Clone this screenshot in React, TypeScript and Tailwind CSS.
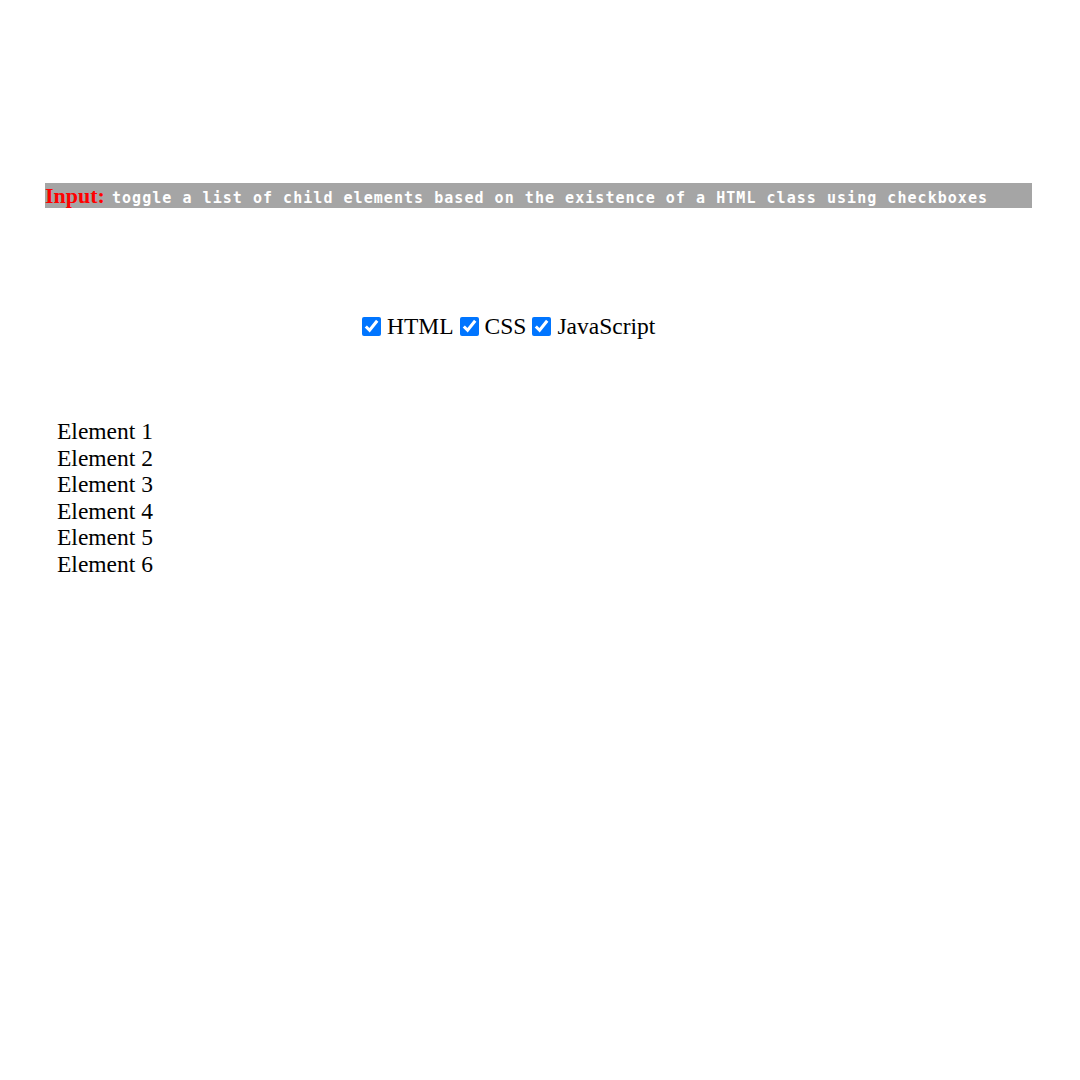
export default function App() {
  const items = [1, 2, 3, 4, 5, 6];
  const boxes = ["HTML", "CSS", "JavaScript"];
  return (
    <div className="w-[1080px] h-[1080px] bg-white" style={{ fontFamily: '"Liberation Serif", "Times New Roman", serif' }}>
      <div className="pt-[183px]">
        <div className="ml-[45px] w-[987px] h-[25px] bg-[#a5a5a5] flex items-baseline pt-[2px] whitespace-nowrap overflow-hidden">
          <span className="text-[22px] font-bold text-[#ff0000] leading-[22px]" style={{ fontFamily: '"Liberation Serif", serif' }}>Input:</span>
          <span className="ml-[7px] text-[15px] font-bold text-white tracking-[1.04px] leading-[22px]" style={{ fontFamily: '"DejaVu Sans Mono", "Liberation Mono", monospace' }}>
            toggle a list of child elements based on the existence of a HTML class using checkboxes
          </span>
        </div>
      </div>
      <div className="mt-[105px] ml-[362px] flex items-center h-[26px] text-[23.5px] text-black">
        {boxes.map((b, i) => (
          <label key={b} className={`flex items-center ${i > 0 ? "ml-[6px]" : ""}`}>
            <input type="checkbox" defaultChecked className="w-[19px] h-[19px] m-0 accent-[#0075ff]" />
            <span className="ml-[6px] leading-[26px]">{b}</span>
          </label>
        ))}
      </div>
      <div className="mt-[79px] ml-[57px] text-[23.5px] leading-[26.5px] text-black">
        {items.map((n) => (
          <div key={n}>Element {n}</div>
        ))}
      </div>
    </div>
  );
}
